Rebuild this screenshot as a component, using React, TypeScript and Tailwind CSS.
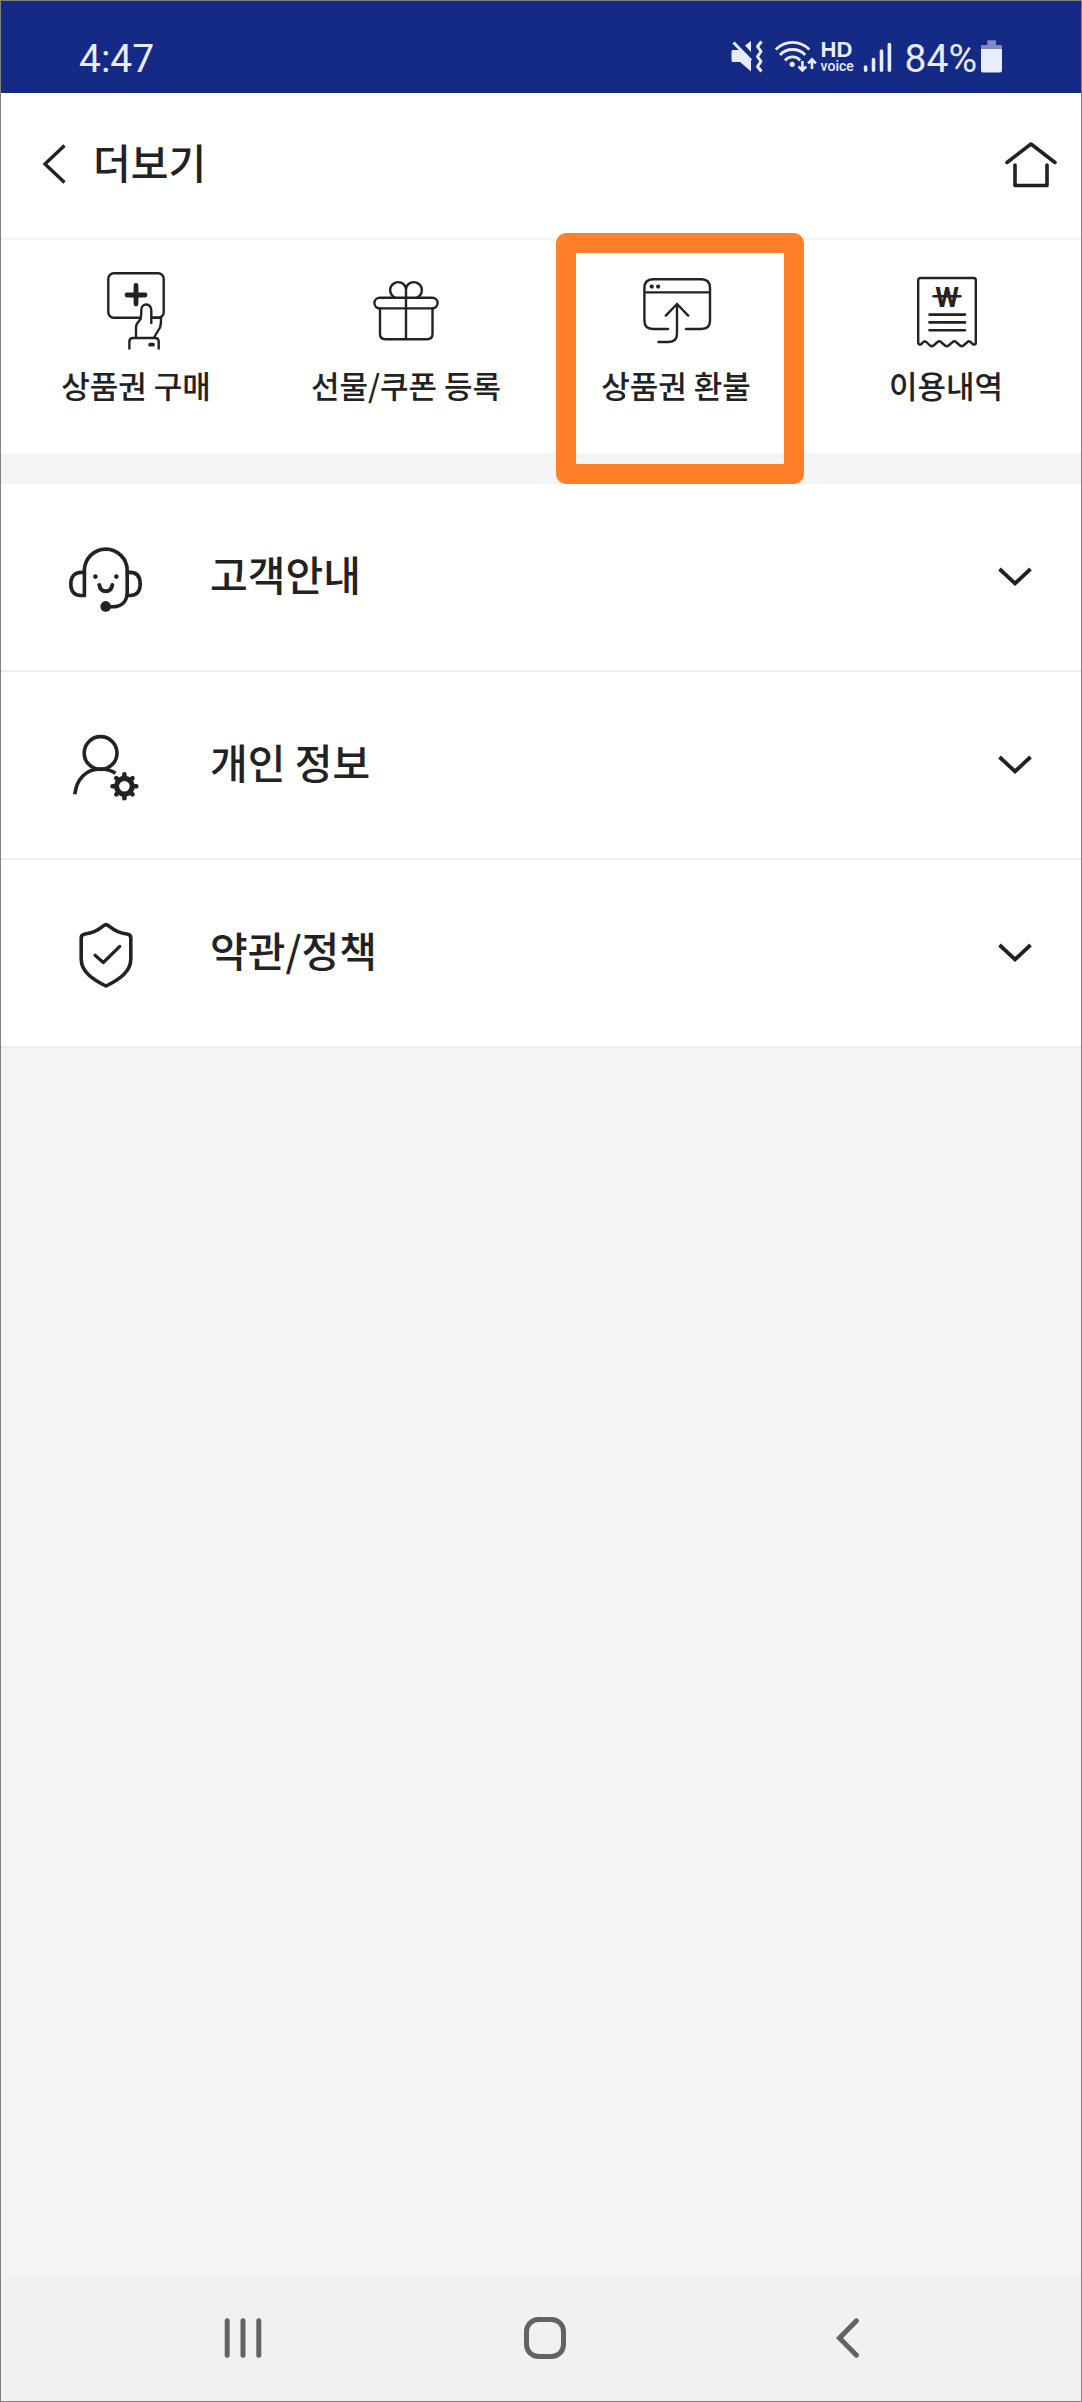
import { useState, type ReactNode } from "react";

type QuickMenu = { id: string; label: string; icon: ReactNode };
type Section = { id: string; label: string; icon: ReactNode };

const quickIcon = {
  className: "w-20 h-20",
  viewBox: "0 0 80 80",
  fill: "none",
  stroke: "#222",
  strokeWidth: 2.4,
  strokeLinecap: "round",
  strokeLinejoin: "round",
  "aria-hidden": true,
} as const;

const sectionIcon = {
  ...quickIcon,
  className: "w-[74px] h-[74px] shrink-0",
  viewBox: "0 0 74 74",
  strokeWidth: 3.6,
} as const;

const quickMenus: QuickMenu[] = [
  {
    id: "buy",
    label: "상품권 구매",
    icon: (
      <svg {...quickIcon}>
        <rect x="12.3" y="2.2" width="55.4" height="44.6" rx="5.5" />
        <path d="M40 14.5v18.5M31 24h18" strokeWidth="4.8" />
        <path
          d="M40 66.5V56.5Q40 54 41.5 52L44.6 48Q45.3 45 45.3 39A5 5.5 0 0 1 55.3 39V46.8H65Q65.3 53 64 56L58 66.5Z"
          fill="#fff"
          stroke="none"
        />
        <path d="M40 66.5V56.5Q40 54 41.5 52L44.6 48Q45.3 45 45.3 39A5 5.5 0 0 1 55.3 39V52" />
        <path d="M55.3 46.8H65Q65.3 53 64 56.5L58 66.5" />
        <path d="M33.4 78.5V70.5Q33.4 67 37 67H59Q62.7 67 62.7 70.5V78.5" strokeLinecap="butt" />
        <path d="M54.2 73.7h2.8" strokeWidth="3.8" />
      </svg>
    ),
  },
  {
    id: "gift",
    label: "선물/쿠폰 등록",
    icon: (
      <svg {...quickIcon}>
        <rect x="8.4" y="26.8" width="63.2" height="10.6" rx="5.3" />
        <path d="M14 37.4V63Q14 68.3 19.5 68.3H61Q66.5 68.3 66.5 63V37.4M40 16V68.3" />
        <path d="M40 17.5A8 8 0 1 0 29 26.5M40 17.5A8 8 0 1 1 51 26.5" />
      </svg>
    ),
  },
  {
    id: "refund",
    label: "상품권 환불",
    icon: (
      <svg {...quickIcon}>
        <path d="M32 58H17Q8.4 58 8.4 49.5V17Q8.4 8.2 17 8.2H65.5Q74 8.2 74 17V49.5Q74 58 65.5 58H50M8.4 21.4H74" />
        <path d="M29.8 44.6L41 33L52.2 44.6M41 33V62.5Q41 71 32.5 71H22.5" />
        <g fill="#222" stroke="none">
          <circle cx="15.7" cy="15.6" r="2.1" />
          <circle cx="22.1" cy="15.6" r="2.1" />
        </g>
      </svg>
    ),
  },
  {
    id: "history",
    label: "이용내역",
    icon: (
      <svg {...quickIcon}>
        <path d="M12.2 72V9.2Q12.2 7 14.4 7H67.6Q69.8 7 69.8 9.2V72Q69.5 74 67 73.3L64.5 71Q63 69.6 61.5 71L57.5 74.5Q55.7 76 54 74.5L50 71Q48.4 69.5 46.7 71L42.5 74.5Q40.8 76 39 74.5L35 71Q33.3 69.5 31.6 71L27.5 74.5Q25.8 76 24 74.5L20.3 71Q18.8 69.8 17.3 71L15 73.3Q12.6 74 12.2 72Z" />
        <path d="M23.5 43.6H59M23.5 51.4H59M23.5 59.3H59" strokeWidth="2.6" />
        <path d="M27.5 25.3H54.5" />
        <text x="41" y="36" fontSize="27" textAnchor="middle" fill="#222" stroke="none" className="font-bold font-[Roboto,sans-serif]">
          W
        </text>
      </svg>
    ),
  },
];

const sections: Section[] = [
  {
    id: "guide",
    label: "고객안내",
    icon: (
      <svg {...sectionIcon}>
        <path d="M15.4 55.5V30.5A21.4 21.4 0 0 1 58.2 30.5V52C58.2 62 52 66.8 43.5 66.8H37" />
        <path d="M15.4 32.4H12.5C5 32.4 1.8 37 1.8 44C1.8 51 5 55.5 11.5 55.5H15.4" />
        <path d="M58.2 32.4H61C68 32.4 71.2 37 71.2 44C71.2 51 68 55.5 61.5 55.5H57.8" />
        <path d="M30.3 45C31 49 33.5 51.3 36.8 51.3C40 51.3 42.6 49 43.3 45" strokeWidth="4" />
        <g fill="#222" stroke="none">
          <circle cx="26.4" cy="36.6" r="2.3" />
          <circle cx="47.4" cy="36.6" r="2.3" />
          <circle cx="36.7" cy="66.4" r="5.3" />
        </g>
      </svg>
    ),
  },
  {
    id: "profile",
    label: "개인 정보",
    icon: (
      <svg {...sectionIcon} strokeLinecap="butt">
        <circle cx="31.6" cy="25" r="16.4" />
        <path d="M5.8 66.3C7.5 51 17 41 31.6 41C37.5 41 42.5 42.5 46.5 45.2" />
        <circle cx="55.4" cy="58.3" r="7.9" strokeWidth="5.2" />
        <path
          d="M55.4 49V46.4M55.4 67.6V70.2M46.1 58.3H43.5M64.7 58.3H67.3M48.8 51.7L47.3 50.2M62 51.7L63.5 50.2M48.8 64.9L47.3 66.4M62 64.9L63.5 66.4"
          strokeWidth="4.6"
          strokeLinecap="round"
        />
      </svg>
    ),
  },
  {
    id: "terms",
    label: "약관/정책",
    icon: (
      <svg {...sectionIcon}>
        <path d="M37 8.6C33 8.6 31.5 16 16 18Q12.2 18.5 12.2 22V43C12.2 56 24 63.5 37 70C50 63.5 61.8 56 61.8 43V22Q61.8 18.5 58 18C42.5 16 41 8.6 37 8.6Z" />
        <path d="M26 39.3L34.3 46.5L50.8 30.4" strokeWidth="3.2" />
      </svg>
    ),
  },
];

function StatusBar() {
  return (
    <div className="flex items-center justify-between h-[92px] pt-[18px] pl-[78px] pr-[78px] bg-[#152a85] text-[#e9ecfd] font-[Roboto,sans-serif]">
      <span className="pt-1.5 text-[39px] leading-10">4:47</span>
      <div className="flex items-center">
        <svg className="w-11 h-10" viewBox="0 0 44 40" fill="none" stroke="currentColor" strokeWidth="3" aria-hidden="true">
          <path d="M2.5 6.5L20 24.5" />
          <path d="M2 14H9L20 25V35.5L9 26H2Q.5 26 .5 24.5V15.5Q.5 14 2 14ZM14 9.5L20 5V16Z" fill="currentColor" stroke="none" />
          <path d="M30.5 5.5L26.5 10.5L30 15.5L26.5 20.5L30 25.5L26.5 30.5L30.5 35.5" strokeLinejoin="round" />
        </svg>
        <svg className="w-[46px] h-10" viewBox="0 0 46 40" fill="none" stroke="currentColor" strokeWidth="2.8" aria-hidden="true">
          <path d="M.8 13.5Q8 6.3 17.6 6.3T34.4 13.5M5 19Q10 13.5 17.6 13.5T30.2 19M10 24.5Q13 20.8 17.6 20.8T25.2 24.5" />
          <circle cx="17.2" cy="28.3" r="2.6" fill="currentColor" stroke="none" />
          <path d="M27.4 25V34M23.5 30.5L27.4 34.4L31.3 30.5M37 33V24M33.1 27.3L37 23.4L40.9 27.3" strokeWidth="2.6" />
        </svg>
        <div className="w-10 flex flex-col pt-1">
          <span className="font-[Liberation_Sans,sans-serif] text-[22px] leading-4 font-bold">HD</span>
          <span className="text-[14px] leading-4 font-medium">voice</span>
        </div>
        <svg className="w-11 h-10" viewBox="0 0 44 40" stroke="currentColor" strokeWidth="3.6" strokeLinecap="round" aria-hidden="true">
          <path d="M4.6 31V34.2M12.5 23.5V34.2M20.5 15V34.2M28.4 8.5V34.2" />
        </svg>
        <span className="pt-1.5 text-[39px] leading-10">84%</span>
        <svg className="w-[22px] h-10 ml-1" viewBox="0 0 22 40" fill="currentColor" aria-hidden="true">
          <path d="M6.3 9V5Q6.3 4.3 7 4.3H14.3Q15 4.3 15 5V9H20Q21 9 21 10V13H0V10Q0 9 1 9Z" opacity=".5" />
          <path d="M0 13H21V34.5Q21 36.5 19 36.5H2Q0 36.5 0 34.5Z" />
        </svg>
      </div>
    </div>
  );
}

function Header() {
  return (
    <header className="flex items-center justify-between h-[147px] pb-1 pl-10 pr-6 bg-white border-b-2 border-[#f4f4f4]">
      <div className="flex items-center gap-[26px]">
        <button aria-label="뒤로">
          <svg className="w-[26px] h-10" viewBox="0 0 26 40" fill="none" stroke="#222" strokeWidth="3.4" aria-hidden="true">
            <path d="M23.5 1.5L4 20L23.5 38.5" />
          </svg>
        </button>
        <h1 className="pb-1.5 text-[41px] leading-10 font-medium">더보기</h1>
      </div>
      <button aria-label="홈">
        <svg className="w-[52px] h-12" viewBox="0 0 52 48" fill="none" stroke="#222" strokeWidth="3.6" strokeLinecap="round" strokeLinejoin="round" aria-hidden="true">
          <path d="M2 22.5L26 4L50 22.5M10 25V45.5H42V25" />
        </svg>
      </button>
    </header>
  );
}

function QuickMenuItem({ menu, highlighted }: { menu: QuickMenu; highlighted: boolean }) {
  return (
    <li className="relative">
      <button className="flex flex-col items-center w-full h-[213px] pt-[31px] gap-3.5">
        {menu.icon}
        <span className="text-[31px] leading-10 font-medium whitespace-nowrap">{menu.label}</span>
      </button>
      {highlighted && (
        <div className="absolute -top-[7px] -bottom-[31px] left-[15px] right-[7px] border-20 border-[#ff8029] rounded-[10px] pointer-events-none" />
      )}
    </li>
  );
}

function SectionRow({ section, open, onToggle }: { section: Section; open: boolean; onToggle: () => void }) {
  return (
    <li className="border-b-2 border-[#edf0f3]">
      <button onClick={onToggle} aria-expanded={open} className="flex items-center w-full h-[186px] pl-[68px] pr-[49px]">
        {section.icon}
        <span className="flex-1 pl-[67px] pb-2 text-left text-[41px] leading-10 font-medium">{section.label}</span>
        <svg
          className={open ? "w-[34px] h-5 rotate-180" : "w-[34px] h-5"}
          viewBox="0 0 34 20"
          fill="none"
          stroke="#222"
          strokeWidth="3.8"
          aria-hidden="true"
        >
          <path d="M1.5 2L17 16.5L32.5 2" />
        </svg>
      </button>
    </li>
  );
}

function NavigationBar() {
  return (
    <nav className="grid grid-cols-3 items-center justify-items-center h-[126px] pl-[91px] pr-[82px] bg-[#f1f1f1]">
      <button aria-label="최근 앱">
        <svg className="w-11 h-11" viewBox="0 0 44 44" stroke="#636363" strokeWidth="5" strokeLinecap="round" aria-hidden="true">
          <path d="M6.2 4.8V39.2M22 4.8V39.2M37.8 4.8V39.2" />
        </svg>
      </button>
      <button aria-label="홈 화면">
        <svg className="w-11 h-11" viewBox="0 0 44 44" fill="none" stroke="#636363" strokeWidth="5" aria-hidden="true">
          <rect x="3.5" y="3.5" width="37" height="37" rx="12" />
        </svg>
      </button>
      <button aria-label="이전">
        <svg className="w-11 h-11" viewBox="0 0 44 44" fill="none" stroke="#636363" strokeWidth="5" strokeLinecap="round" aria-hidden="true">
          <path d="M30.5 4.8L13.5 22L30.5 39.2" />
        </svg>
      </button>
    </nav>
  );
}

export default function App() {
  const [openSection, setOpenSection] = useState<string | null>(null);

  return (
    <div className="min-h-screen flex flex-col border border-[#808080] bg-[#f4f4f4] text-[#222] font-['Noto_Sans_CJK_KR',sans-serif]">
      <StatusBar />
      <Header />

      <main className="flex-1">
        {/* Quick menu */}
        <ul className="grid grid-cols-4 mb-[31px] bg-white">
          {quickMenus.map((menu) => (
            <QuickMenuItem key={menu.id} menu={menu} highlighted={menu.id === "refund"} />
          ))}
        </ul>

        {/* Sections */}
        <ul className="bg-white">
          {sections.map((section) => (
            <SectionRow
              key={section.id}
              section={section}
              open={openSection === section.id}
              onToggle={() => setOpenSection(openSection === section.id ? null : section.id)}
            />
          ))}
        </ul>
      </main>

      <NavigationBar />
    </div>
  );
}
